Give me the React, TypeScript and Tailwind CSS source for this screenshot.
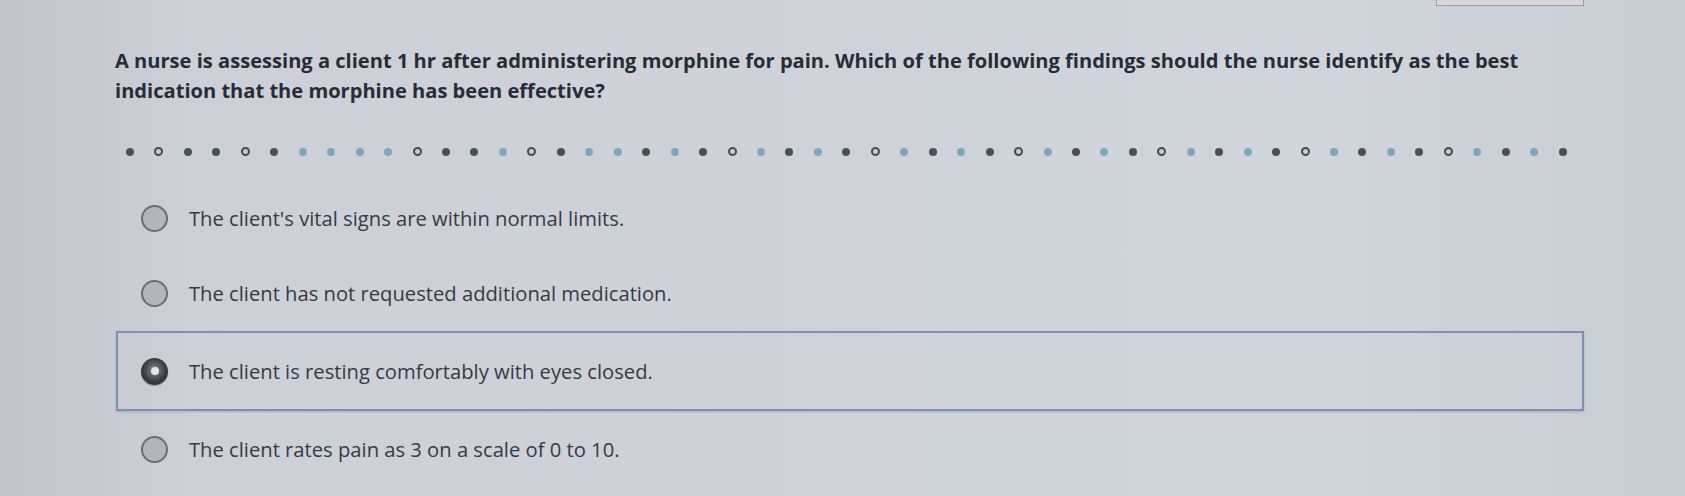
import React from 'react';

type Dot = 'd' | 'r' | 'b';

// progress markers, left to right
const dots: Dot[] = 'drddrdbbbbrddbrdbbdbdrbdbdrbdbdrbdbdrbdbdrbdbdrbdbd'.split('') as Dot[];

const options = [
  "The client's vital signs are within normal limits.",
  'The client has not requested additional medication.',
  'The client is resting comfortably with eyes closed.',
  'The client rates pain as 3 on a scale of 0 to 10.',
];

const selected = 2;

function Marker({ kind }: { kind: Dot }) {
  if (kind === 'r') {
    return <span className="block w-[9px] h-[9px] rounded-full border-2 border-[#474b52] bg-[#c9ccd2]" />;
  }
  if (kind === 'b') {
    return <span className="block w-[8px] h-[8px] rounded-full bg-[#7ea8b9]" />;
  }
  return <span className="block w-[8px] h-[8px] rounded-full bg-[#4b4f57]" />;
}

function Radio({ checked }: { checked: boolean }) {
  if (checked) {
    return (
      <span className="flex items-center justify-center w-[27px] h-[27px] rounded-full bg-[radial-gradient(circle_at_50%_45%,#8a8d92_0%,#3a3d42_55%,#1f2226_100%)] shadow-[0_1px_1px_rgba(0,0,0,0.3)]">
        <span className="block w-[8px] h-[8px] rounded-full bg-[#e4e6ea]" />
      </span>
    );
  }
  return <span className="block w-[27px] h-[27px] rounded-full border-2 border-[#6a6d73] bg-[#b2b5bb]" />;
}

export default function App() {
  return (
    <div
      className="relative w-[1685px] h-[496px] overflow-hidden bg-[linear-gradient(90deg,#c2c5cc_0%,#cdd0d6_12%,#cfd3d9_50%,#d0d5dc_80%,#c8ccd3_100%)]"
      style={{ fontFamily: '"Open Sans", "Noto Sans", sans-serif' }}
    >
      <div className="absolute left-[1436px] top-[-4px] w-[148px] h-[10px] border border-[#9a9da3] bg-[#d6d8dc]" />

      <div className="pl-[115px] pt-[46px]">
        <p className="w-[1440px] text-[20.1px] leading-[30px] font-bold text-[#262d36]">
          A nurse is assessing a client 1 hr after administering morphine for pain. Which of the following findings should the nurse identify as the best indication that the morphine has been effective?
        </p>

        <div className="mt-[41px] ml-[11px] w-[1441px] h-[9px] flex items-center justify-between">
          {dots.map((k, i) => (
            <Marker key={i} kind={k} />
          ))}
        </div>

        <div className="mt-[25px] w-[1468px] ml-[1px] flex flex-col">
          {options.map((text, i) => (
            <div
              key={i}
              className={
                i === selected
                  ? 'h-[80px] flex items-center gap-[21px] pl-[23px] border-2 border-[#7e91b2] shadow-[0_1px_2px_rgba(60,80,120,0.25)]'
                  : i === 0
                    ? 'h-[74px] flex items-center gap-[21px] pl-[25px]'
                    : 'h-[76px] flex items-center gap-[21px] pl-[25px]'
              }
            >
              <Radio checked={i === selected} />
              <span className="text-[20.2px] text-[#363b43]">{text}</span>
            </div>
          ))}
        </div>
      </div>
    </div>
  );
}
